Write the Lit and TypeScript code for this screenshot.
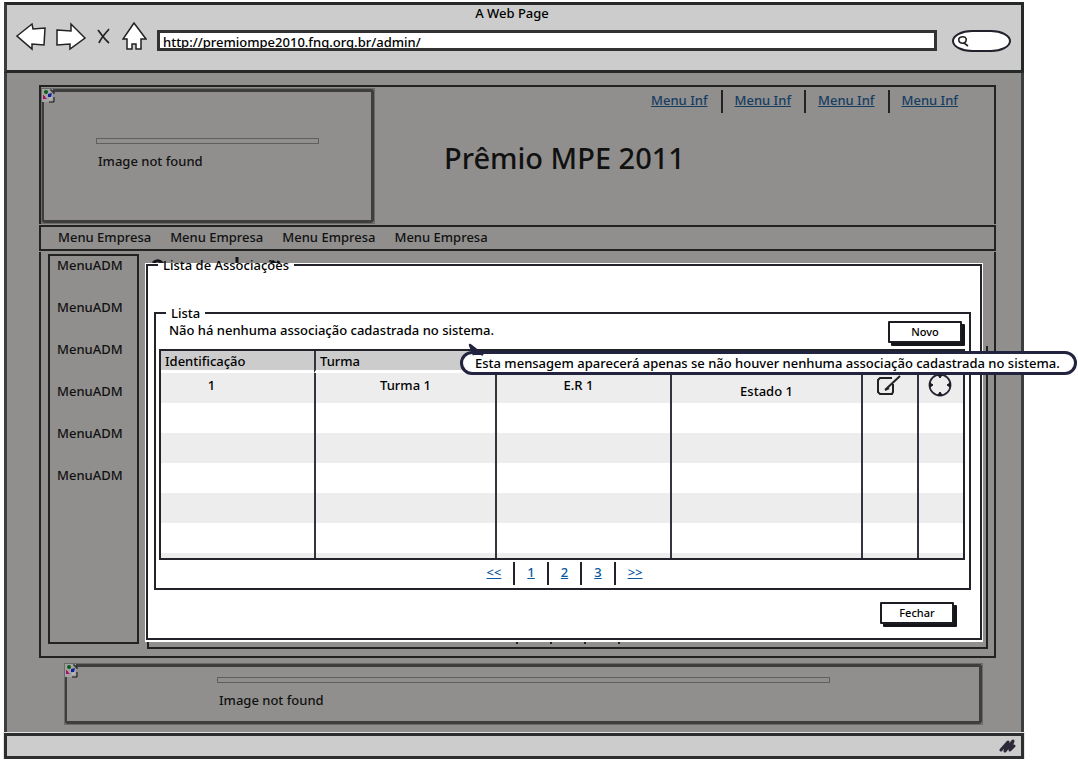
import { LitElement, html, svg, css } from "lit";
import { customElement } from "lit/decorators.js";

const brokenIcon = svg`
  <rect x="0" y="0" width="11" height="13" fill="#a3a3a1"/>
  <circle cx="4" cy="3" r="2" fill="#0b5a1c"/>
  <path d="M1 6l4 4H1z" fill="#a3107c"/><path d="M1 6l2 2" stroke="#b02020"/>
  <path d="M6 5l4-1-1 4H6z" fill="#1020a0"/>
  <path d="M8 1h2v2h2v2M12 8v5H7" fill="none" stroke="#111" stroke-width="1"/>
  <path d="M9 8v2H7" fill="none" stroke="#c5c5c3"/>`;

@customElement("missing-image")
export class MissingImage extends LitElement {
  static styles = css`
    :host { display: block; box-sizing: border-box; border: 1px solid #6a6a69; }
    * { box-sizing: border-box; }
    .frame {
      height: 100%;
      border: 3px solid #3e3e3e;
      border-left-width: 2px;
      border-radius: 3px 2px 3px 2px;
      display: grid;
      grid-template-columns: 13px minmax(0, 1fr);
    }
    .icon { width: 14px; height: 14px; display: block; margin: -3px 0 0 -2px; }
    .body { padding: var(--inset); }
    .line { height: 6px; border: 1px solid #5f5f5e; }
    .caption { margin: 8px 0 0 2px; line-height: 18px; }
  `;
  render() {
    return html`<div class="frame">
      <svg class="icon" viewBox="0 0 14 14" aria-hidden="true">${brokenIcon}</svg>
      <div class="body"><div class="line"></div><div class="caption">Image not found</div></div>
    </div>`;
  }
}

@customElement("app-root")
export class AppRoot extends LitElement {
  static styles = css`
    :host {
      display: block;
      padding: 2px 54px 0 4px;
      background: #fff;
      color: #111;
      font: 500 13px/18px "Comic Sans MS", "Noto Sans", sans-serif;
    }
    * { box-sizing: border-box; }
    button, input { font: inherit; color: inherit; }
    fieldset { min-width: 0; margin: 0; }

    .chrome { background: #ccc; border: 3px solid #262828; border-left-color: #3a3c40; padding-bottom: 18px; }
    .title { text-align: center; line-height: 17px; color: #000; padding-right: 4px; }
    .toolbar { display: flex; align-items: flex-start; }
    .tool { border: 0; background: none; padding: 0; height: 29px; margin-right: 10px; }
    .tool:first-child { margin-left: 9px; }
    .tool svg { display: block; height: 29px; }
    .address { flex: 1; margin: 8px 15px 0 0; height: 21px; border: 3px solid #303234; background: #fff; overflow: hidden; }
    .address input { display: block; width: 100%; height: 17px; border: 0; padding: 0 3px; background: none; outline: 0; color: #000; }
    .search { position: relative; width: 59px; height: 22px; margin: 8px 10px 0 0; }
    .search input { width: 100%; height: 100%; border: 2px solid #22222c; border-radius: 20px / 11px; padding: 0 8px 0 20px; background: #fff; outline: 0; display: block; }
    .search svg { position: absolute; left: 4px; top: 5px; width: 13px; height: 13px; }

    .page { background: #908f8d; border: solid #3c3d3e; border-width: 0 3px; padding: 12px 25px 8px 32px; }
    .banner { height: 139px; border: 2px solid #222; border-bottom: 0; display: grid; grid-template-columns: 334px minmax(0, 1fr); }
    .logo { margin-top: 1px; --inset: 46px 52px 0 39px; }
    .links { display: flex; justify-content: flex-end; padding: 3px 23px 0 0; }
    .links a { padding: 1px 13px 4px 12px; color: #163d62; }
    .links a + a { border-left: 2px solid #222; }
    h1 { margin: 27px 0 0 69px; font-size: 29px; line-height: 36px; font-weight: 500; }
    .nav { display: flex; gap: 19px; margin-top: 1px; height: 26px; border: 2px solid #222; padding: 1px 17px; }
    .nav a, .side a { color: inherit; text-decoration: none; }
    .content { position: relative; margin-top: 1px; min-height: 406px; border: 2px solid #222; border-top: 0; display: flex; padding: 2px 6px 7px 7px; gap: 8px; }
    .side { width: 91px; margin-bottom: 5px; border: 2px solid #222; padding-left: 7px; display: flex; flex-direction: column; gap: 24px; }
    .under { flex: 1; display: flex; flex-direction: column; }
    .trace { width: 140px; height: 14px; display: block; }
    .shade { flex: 1; margin-top: 78px; border: 2px solid #222; border-top: 0; display: flex; align-items: flex-end; justify-content: center; gap: 32px; padding-bottom: 3px; }
    .shade i { width: 2px; height: 23px; background: #222; }
    .footer { height: 62px; margin: 5px 13px 0 25px; --inset: 10px 149px 0 137px; }
    .status { height: 26px; background: #ccc; border: 3px solid #2b2d2f; outline: 1px solid #e4e4e0; outline-offset: 0; display: flex; justify-content: flex-end; }
    .status svg { width: 18px; height: 18px; margin: 1px 4px; }

    .modal { position: absolute; left: 105px; right: 12px; top: 5px; bottom: 16px; color: #000; }
    .window { height: 100%; border: 2px solid #22232a; background: #fff; box-shadow: 0 0 0 1px #fff, 0 1px 0 1px #fff; padding: 32px 9px 12px 6px; display: flex; flex-direction: column; }
    legend { line-height: 16px; padding: 0 5px; margin-left: 4px; }
    .list { border: 2px solid #22232a; padding: 0 4px 0 3px; }
    .list legend { margin-left: 7px; }
    .row { display: flex; justify-content: space-between; height: 28px; padding: 0 3px 0 10px; }
    .btn { width: 74px; height: 22px; border: 2px solid #1c1d22; background: #fff; box-shadow: 3px 3px 0 #15161a; padding: 0; font-size: 11px; line-height: 16px; border-radius: 1px; }
    .close { display: flex; justify-content: flex-end; padding: 12px 17px 0 0; }
    .grid { height: 211px; overflow: hidden; border: 2px solid #22232a; }
    table { width: 100%; border-collapse: separate; border-spacing: 0; table-layout: fixed; }
    th { height: 22px; padding: 0 0 0 4px; font-weight: 500; text-align: left; background: #ccc; border-bottom: 3px solid #fff; line-height: 18px; }
    td { height: 30px; padding: 0 0 6px; text-align: center; }
    td + td, th + th { border-left: 2px solid #33343e; }
    tr:nth-child(odd) td { background: #ededed; }
    th { background: #ccc; }
    td.first { padding-right: 52px; }
    td.low { padding: 6px 0 0; }
    td.region { padding-right: 10px; }
    td button { border: 0; background: none; padding: 0; width: 26px; height: 24px; display: block; margin: 0 auto; }
    td svg { display: block; width: 26px; height: 24px; }
    .pager { display: flex; justify-content: center; height: 28px; padding: 2px 0 3px 5px; }
    .pager a { color: #0b579b; padding: 1px 12px 0; line-height: 18px; }
    .pager a + a { border-left: 2px solid #22232a; }
    .note { position: absolute; left: 314px; top: 94px; height: 24px; padding: 0 14px 0 12px; border: 3px solid #22233f; border-radius: 12px; background: #fff; white-space: nowrap; }
    .note svg { position: absolute; left: 3px; top: -11px; width: 20px; height: 16px; }
  `;

  render() {
    const s = "#222";
    return html`
      <header class="chrome">
        <div class="title">A Web Page</div>
        <div class="toolbar">
          <button class="tool" aria-label="Back"><svg width="30" viewBox="0 0 30 29"><path d="M1 14L16 2l1 5 12-1-1 17-12-1v5z" fill="#fff" stroke=${s} stroke-width="1.5"/></svg></button>
          <button class="tool" aria-label="Forward"><svg width="30" viewBox="0 0 30 29"><path d="M1 8l14 1V2l14 14-15 11v-5L1 23z" fill="#fff" stroke=${s} stroke-width="1.5"/></svg></button>
          <button class="tool" aria-label="Stop"><svg width="16" viewBox="0 0 16 29"><path d="M2 8c3 4 6 9 11 13M13 7C9 12 5 16 3 21" fill="none" stroke=${s} stroke-width="1.7"/></svg></button>
          <button class="tool" aria-label="Home"><svg width="25" viewBox="0 0 25 29"><path d="M12 1L1 17h4v10h5v-5h4v5h5V17h5z" fill="#fff" stroke=${s} stroke-width="1.5"/></svg></button>
          <div class="address"><input aria-label="Address" value="http://premiompe2010.fnq.org.br/admin/" /></div>
          <div class="search">
            <input type="text" aria-label="Search" />
            <svg viewBox="0 0 13 13"><path d="M5 2c4-1 6 1 5 4S4 9 3 6s1-4 3-4M8 8l4 3" fill="none" stroke=${s} stroke-width="1.6"/></svg>
          </div>
        </div>
      </header>
      <main class="page">
        <section class="banner">
          <missing-image class="logo"></missing-image>
          <div>
            <nav class="links">${[1, 2, 3, 4].map(() => html`<a href="#">Menu Inf</a>`)}</nav>
            <h1>Prêmio MPE 2011</h1>
          </div>
        </section>
        <nav class="nav">${[1, 2, 3, 4].map(() => html`<a href="#">Menu Empresa</a>`)}</nav>
        <section class="content">
          <nav class="side">${[1, 2, 3, 4, 5, 6].map(() => html`<a href="#">MenuADM</a>`)}</nav>
          <div class="under">
            <svg class="trace" viewBox="0 0 140 14" aria-hidden="true"><path d="M6 9q5-5 10 1M90 3v10M124 9q2-2 4 0t4-2" fill="none" stroke="#15161a" stroke-width="3"/></svg>
            <div class="shade"><i></i><i></i><i></i><i></i></div>
          </div>
          <div class="modal" role="dialog">
            <fieldset class="window">
              <legend>Lista de Associações</legend>
              <fieldset class="list">
                <legend>Lista</legend>
                <div class="row"><span>Não há nenhuma associação cadastrada no sistema.</span><button class="btn">Novo</button></div>
                <div class="grid">
                  <table>
                    <colgroup><col width="153" /><col width="181" /><col width="175" /><col width="191" /><col width="56" /><col width="46" /></colgroup>
                    <thead><tr><th>Identificação</th><th>Turma</th><th></th><th></th><th></th><th></th></tr></thead>
                    <tbody>
                      <tr>
                        <td class="first">1</td><td>Turma 1</td><td class="region">E.R 1</td><td class="low">Estado 1</td>
                        <td><button aria-label="Editar"><svg viewBox="0 0 26 24"><path d="M15 5H3L1 7v12l2 2h12l1-2v-8M8 17L23 3M8 17l4-2" fill="none" stroke=${s} stroke-width="2"/></svg></button></td>
                        <td><button aria-label="Estado"><svg viewBox="0 0 26 24"><circle cx="12" cy="12" r="10.5" fill="none" stroke="#2a2533" stroke-width="1.8"/><path d="M10 2h4l-2 3zM10 22h4l-2-3zM2 10v4l3-2zM22 10v4l-3-2z" fill="#1a1622" stroke="#1a1622"/></svg></button></td>
                      </tr>
                      ${[1, 2, 3, 4, 5, 6].map(() => html`<tr><td></td><td></td><td></td><td></td><td></td><td></td></tr>`)}
                    </tbody>
                  </table>
                </div>
                <nav class="pager">${["<<", "1", "2", "3", ">>"].map((t) => html`<a href="#">${t}</a>`)}</nav>
              </fieldset>
              <div class="close"><button class="btn">Fechar</button></div>
            </fieldset>
            <div class="note" role="tooltip">
              <svg viewBox="0 0 20 16" aria-hidden="true"><path d="M8 12L4 2l13 10" fill="#22233f"/><path d="M8 12L4 2l13 10" fill="none" stroke="#22233f" stroke-width="2.5" stroke-linejoin="round"/><path d="M9 13h6l3 3H8z" fill="#fff"/></svg>
              Esta mensagem aparecerá apenas se não houver nenhuma associação cadastrada no sistema.
            </div>
          </div>
        </section>
        <missing-image class="footer"></missing-image>
      </main>
      <footer class="status"><svg viewBox="0 0 18 18" aria-hidden="true"><path d="M2 13L9 5 6 14l8-10-3 9 4-4" fill="none" stroke="#2c2838" stroke-width="3" stroke-linejoin="round" stroke-linecap="round"/></svg></footer>
    `;
  }
}
